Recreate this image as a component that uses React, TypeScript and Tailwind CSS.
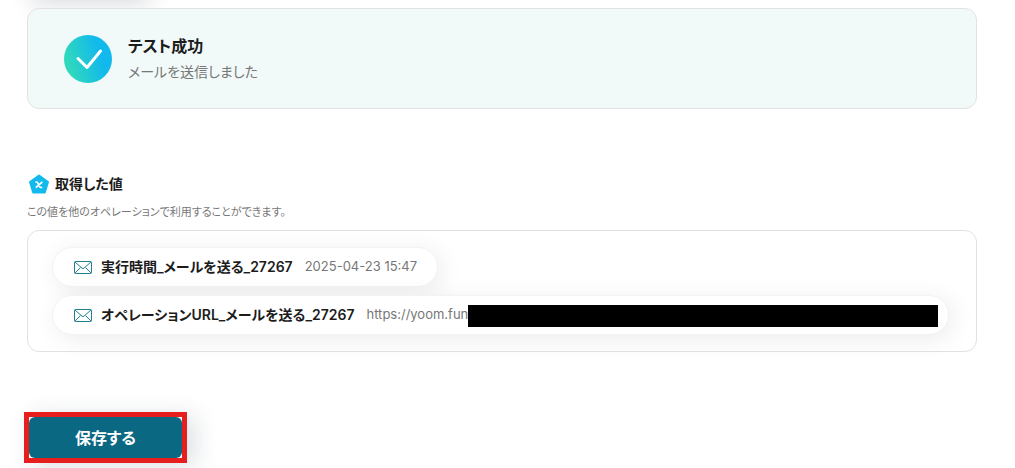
import React from "react";

type OutputValue = {
  name: string;
  value: string;
  masked?: boolean;
};

const outputs: OutputValue[] = [
  { name: "実行時間_メールを送る_27267", value: "2025-04-23 15:47" },
  {
    name: "オペレーションURL_メールを送る_27267",
    value: "https://yoom.fun",
    masked: true,
  },
];

function MailIcon() {
  return (
    <svg
      className="h-3.5 w-5 shrink-0"
      viewBox="0 0 20 14"
      fill="none"
      stroke="#237f93"
      strokeLinejoin="round"
      aria-hidden="true"
    >
      <rect x="1.5" y="1.5" width="17" height="12" rx="0.8" />
      <path d="M2 2l7 6.2q1 .8 2 0L18 2M2 13l5.5-5.5M18 13l-5.5-5.5" />
    </svg>
  );
}

function CheckIcon() {
  return (
    <svg className="size-12 shrink-0" viewBox="0 0 48 48" aria-hidden="true">
      <defs>
        <linearGradient id="check-fill" x1="0" y1="0.65" x2="1" y2="0.35">
          <stop offset="0.1" stopColor="#2fd8bd" />
          <stop offset="0.75" stopColor="#12b9ec" />
        </linearGradient>
      </defs>
      <circle cx="24" cy="24" r="24" fill="url(#check-fill)" />
      <path
        d="M14 23.5l9 9L36.5 16"
        fill="none"
        stroke="#fff"
        strokeWidth="3"
        strokeLinecap="round"
        strokeLinejoin="round"
      />
    </svg>
  );
}

function ValueIcon() {
  return (
    <svg className="size-6 shrink-0" viewBox="0 0 24 24" aria-hidden="true">
      <path
        d="M12 3.5L21 10L17.8 20.5H6.2L3 10Z"
        fill="#12b9ec"
        stroke="#12b9ec"
        strokeWidth="2"
        strokeLinejoin="round"
      />
      <path
        d="M8.4 10h1.2q.7 0 1 .6l2.2 4.3q.3.6 1 .6h1.4M15.4 9.8L8.8 15.6"
        fill="none"
        stroke="#fff"
        strokeWidth="1.6"
      />
    </svg>
  );
}

function ValueChip({ name, value, masked }: OutputValue) {
  return (
    <li
      className={
        masked
          ? "flex h-10 w-full items-center rounded-full border border-[#f3f3f3] bg-white pr-2.5 pl-5 shadow-[4px_4px_24px_rgba(0,0,0,0.08)]"
          : "flex h-10 w-fit items-center rounded-full border border-[#f3f3f3] bg-white px-5 shadow-[4px_4px_24px_rgba(0,0,0,0.08)]"
      }
    >
      <MailIcon />
      <span className="ml-2 shrink-0 text-sm font-semibold">{name}</span>
      <span className="ml-3 shrink-0 text-[13px] text-[#777]">{value}</span>
      {masked && <span className="mt-0.5 h-[22px] flex-1 bg-black" />}
    </li>
  );
}

export default function App(): React.ReactNode {
  return (
    <main className="overflow-hidden bg-white pr-[38px] pb-1.5 pl-[27px] font-['Inter','Noto_Sans_CJK_JP',sans-serif] text-[#1c1c1c] [font-feature-settings:'palt']">
      <div className="-mt-12 mb-2 h-12 w-[120px] rounded-lg bg-[#0b6883] shadow-[4px_4px_24px_rgba(10,20,40,0.15)]" />

      <section className="flex h-[101px] items-center gap-4 rounded-xl border border-[#e2e2e2] bg-[#f1faf9] px-9">
        <CheckIcon />
        <div>
          <h2 className="text-base leading-[26px] font-semibold">テスト成功</h2>
          <p className="text-sm leading-[26px] text-[#777]">
            メールを送信しました
          </p>
        </div>
      </section>

      <section className="mt-[63px]">
        <div className="flex items-center gap-1">
          <ValueIcon />
          <h2 className="text-sm leading-5 font-semibold">取得した値</h2>
        </div>
        <p className="mt-1.5 text-[11px] leading-5 text-[#777]">
          この値を他のオペレーションで利用することができます。
        </p>
        <ul className="mt-2 flex flex-col gap-2 rounded-xl border border-[#e2e2e2] py-4 pr-[27px] pl-6">
          {outputs.map((output) => (
            <ValueChip key={output.name} {...output} />
          ))}
        </ul>
      </section>

      <div className="mt-[60px] -ml-[3px] w-fit border-[5px] border-[#e61e1e] shadow-[8px_4px_24px_rgba(10,40,60,0.14)]">
        <button
          type="button"
          className="block h-[41px] w-[153px] rounded-md bg-[#0b6883] text-base font-semibold text-white"
        >
          保存する
        </button>
      </div>
    </main>
  );
}
